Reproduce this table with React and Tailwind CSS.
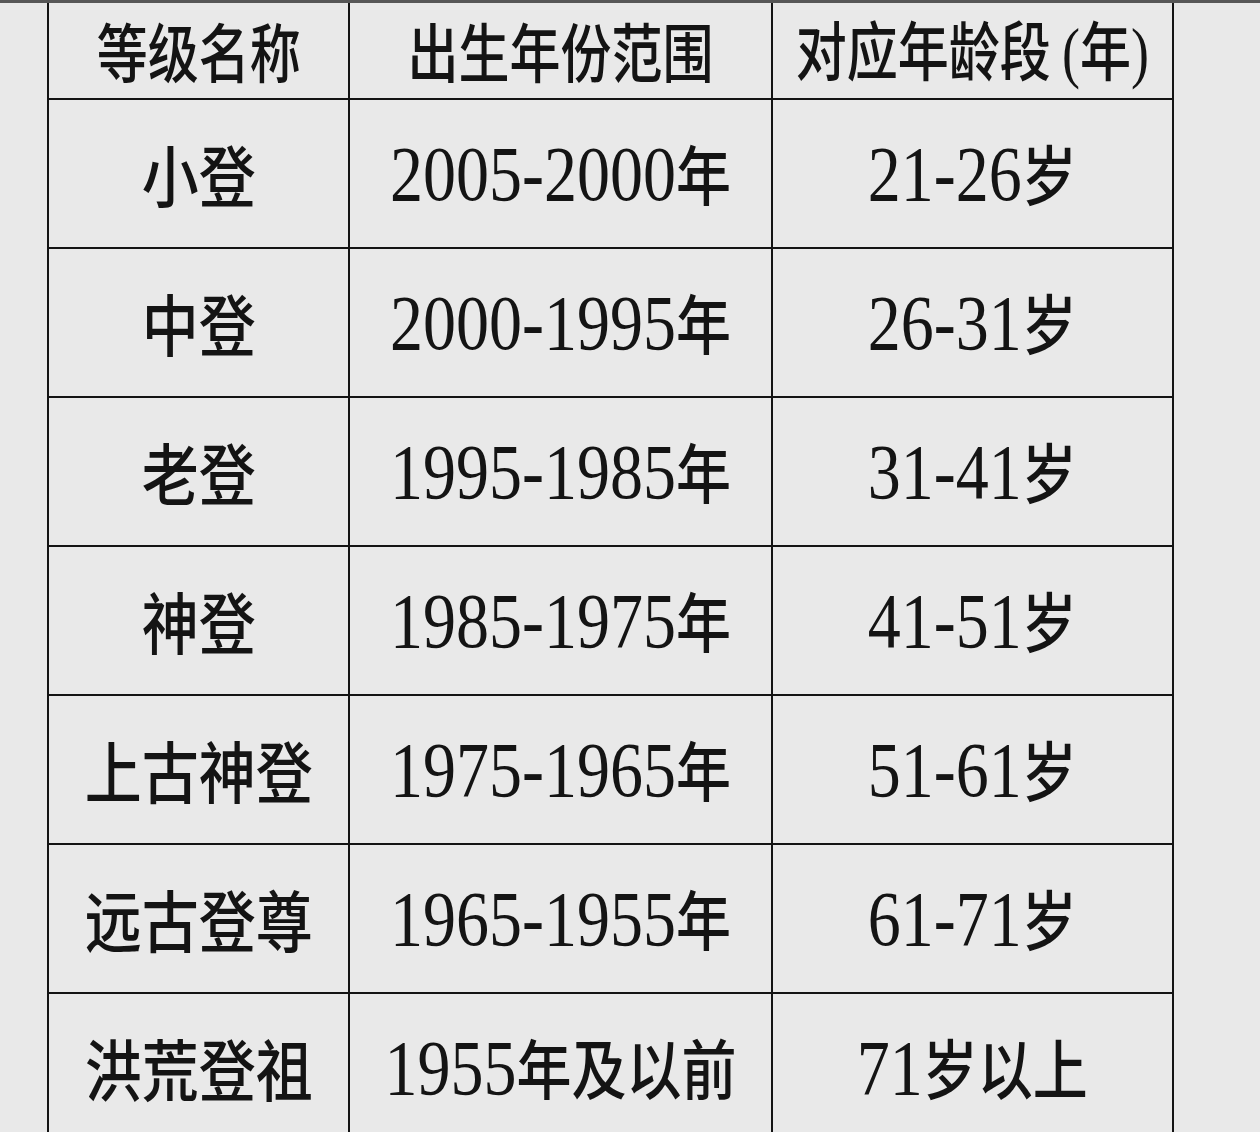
const ROWS = [
  ['小登', '2005-2000年', '21-26岁'],
  ['中登', '2000-1995年', '26-31岁'],
  ['老登', '1995-1985年', '31-41岁'],
  ['神登', '1985-1975年', '41-51岁'],
  ['上古神登', '1975-1965年', '51-61岁'],
  ['远古登尊', '1965-1955年', '61-71岁'],
  ['洪荒登祖', '1955年及以前', '71岁以上'],
]

const FONT = 'font-["Liberation_Serif","Noto_Sans_CJK_SC",serif]'

// split into ascii runs (serif digits) and CJK runs so each can get its own size
function Mixed({ text }) {
  const parts = text.match(/[\x00-\x7f]+|[^\x00-\x7f]+/g) || []
  return parts.map((p, i) =>
    /^[\x00-\x7f]/.test(p)
      ? <span key={i} className='text-[66px] font-normal font-["Liberation_Serif",serif]'>{p}</span>
      : <span key={i} className='text-[55px] font-medium font-["Noto_Sans_CJK_SC",sans-serif]'>{p}</span>
  )
}

function Cell({ w, children }) {
  return (
    <div className={`${w} h-full flex items-center justify-center border-r-2 border-[#141414]`}>
      {children}
    </div>
  )
}

export default function App() {
  return (
    <div className={`w-full h-[1132px] overflow-hidden bg-[#e9e9e9] border-t-[3px] border-[#575757] ${FONT} text-[#141414]`}>
      <div className="ml-[47px] w-[1127px] border-l-2 border-[#141414]">
        <div className="flex h-[97px] border-b-2 border-[#141414]">
          <Cell w="w-[302px]">
            <span className='scale-y-[1.25] text-[51px] font-medium font-["Noto_Sans_CJK_SC",sans-serif] leading-none'>等级名称</span>
          </Cell>
          <Cell w="w-[423px]">
            <span className='scale-y-[1.25] text-[51px] font-medium font-["Noto_Sans_CJK_SC",sans-serif] leading-none'>出生年份范围</span>
          </Cell>
          <Cell w="w-[402px]">
            <span className="scale-y-[1.25] leading-none whitespace-nowrap">
              <span className='text-[51px] font-medium font-["Noto_Sans_CJK_SC",sans-serif]'>对应年龄段 </span>
              <span className='text-[54px] font-["Liberation_Serif",serif]'>(</span>
              <span className='text-[51px] font-medium font-["Noto_Sans_CJK_SC",sans-serif]'>年</span>
              <span className='text-[54px] font-["Liberation_Serif",serif]'>)</span>
            </span>
          </Cell>
        </div>
        {ROWS.map(r => (
          <div key={r[0]} className="flex h-[149px] border-b-2 border-[#141414]">
            <Cell w="w-[302px]">
              <span className='scale-y-[1.17] text-[57px] font-medium font-["Noto_Sans_CJK_SC",sans-serif] leading-none whitespace-nowrap'>{r[0]}</span>
            </Cell>
            <Cell w="w-[423px]">
              <span className="scale-y-[1.18] leading-none whitespace-nowrap"><Mixed text={r[1]} /></span>
            </Cell>
            <Cell w="w-[402px]">
              <span className="scale-y-[1.18] leading-none whitespace-nowrap"><Mixed text={r[2]} /></span>
            </Cell>
          </div>
        ))}
      </div>
    </div>
  )
}
